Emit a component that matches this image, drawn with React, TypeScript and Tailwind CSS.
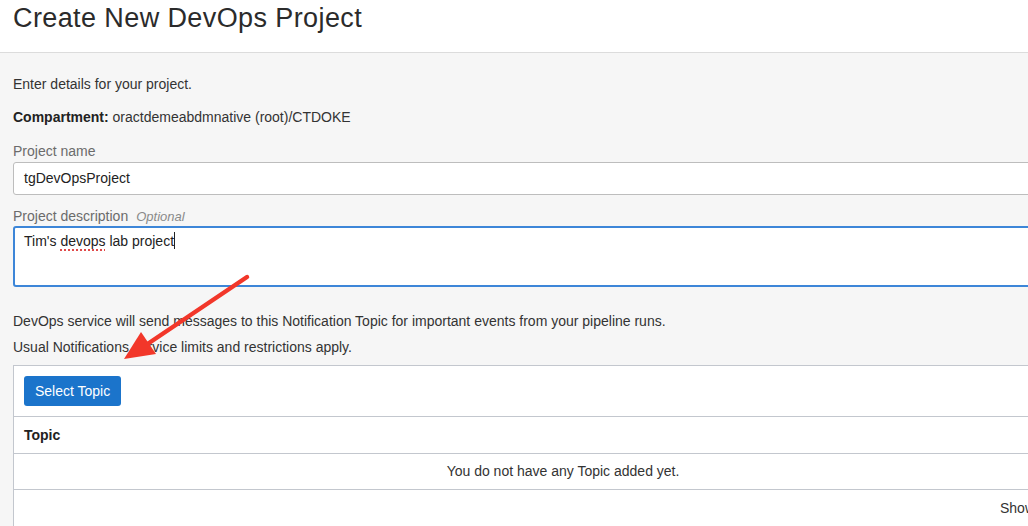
import React from 'react';

const font = { fontFamily: '"Liberation Sans", Arial, Helvetica, sans-serif' };

// Red annotation arrow laid over the form
const Arrow: React.FC = () => (
  <svg
    className="absolute left-0 top-0 pointer-events-none"
    width="300"
    height="400"
    viewBox="0 0 300 400"
  >
    <line x1="247" y1="277" x2="146" y2="345" stroke="#f2372a" strokeWidth="4.5" strokeLinecap="round" />
    <polygon points="124,359 141,332 156,354" fill="#f2372a" />
  </svg>
);

const App: React.FC = () => {
  return (
    <div className="relative w-[1028px] h-[526px] overflow-hidden bg-[#f6f6f6] text-[#333]" style={font}>
      {/* Header */}
      <div className="h-[53px] bg-white border-b border-[#dcdcdc] px-[13px] pt-[1px]">
        <h1 className="text-[27px] leading-[34px] tracking-[0.4px] font-normal text-[#2b2b2b]">Create New DevOps Project</h1>
      </div>

      {/* Body */}
      <div className="pl-[13px]">
        <p className="mt-[21px] text-[14px] leading-[20px]">Enter details for your project.</p>
        <p className="mt-[13px] text-[14px] leading-[20px]">
          <span className="font-bold text-[#222]">Compartment:</span> oractdemeabdmnative (root)/CTDOKE
        </p>

        <label className="block mt-[15px] text-[14px] leading-[18px] text-[#6b6b6b]">Project name</label>
        <div className="mt-[2px] w-[1048px] h-[33px] bg-white border border-[#bdbdbd] rounded-[3px] pl-[10px] flex items-center text-[14px] text-[#222]">
          tgDevOpsProject
        </div>

        <label className="block mt-[12px] text-[14px] leading-[18px] text-[#6b6b6b]">
          Project description
          <span className="ml-[8px] italic text-[13px] text-[#8a8a8a]">Optional</span>
        </label>
        <div className="w-[1048px] h-[61px] bg-white border-2 border-[#3d86d8] rounded-[3px] pl-[9px] pt-[3px] text-[14px] leading-[20px] text-[#222]">
          Tim's{' '}
          <span className="underline decoration-dotted decoration-[#e04a4a] decoration-2 underline-offset-[3px]">devops</span>{' '}
          lab project
          <span className="inline-block w-px h-[17px] bg-[#222] align-[-3px]" />
        </div>

        <p className="mt-[24px] text-[14px] leading-[20px]">
          DevOps service will send messages to this Notification Topic for important events from your pipeline runs.
        </p>
        <p className="mt-[6px] text-[14px] leading-[20px]">Usual Notifications service limits and restrictions apply.</p>

        {/* Topic table */}
        <div className="mt-[8px] w-[1100px] bg-white border border-[#c3c7ce]">
          <div className="px-[10px] pt-[10px] pb-[10px] border-b border-[#c3c7ce]">
            <button className="h-[30px] px-[11px] rounded-[3px] bg-[#1b74cb] text-white text-[14px]">Select Topic</button>
          </div>
          <div className="h-[37px] px-[10px] flex items-center border-b border-[#c3c7ce] text-[14px] font-bold text-[#222]">
            Topic
          </div>
          <div className="h-[36px] flex items-center justify-center border-b border-[#c3c7ce] text-[14px] text-[#333]">
            You do not have any Topic added yet.
          </div>
          <div className="h-[36px] flex items-center pl-[986px] whitespace-nowrap text-[14px] text-[#333]">
            Showing 0 items
          </div>
        </div>
      </div>

      <Arrow />
    </div>
  );
};

export default App;
